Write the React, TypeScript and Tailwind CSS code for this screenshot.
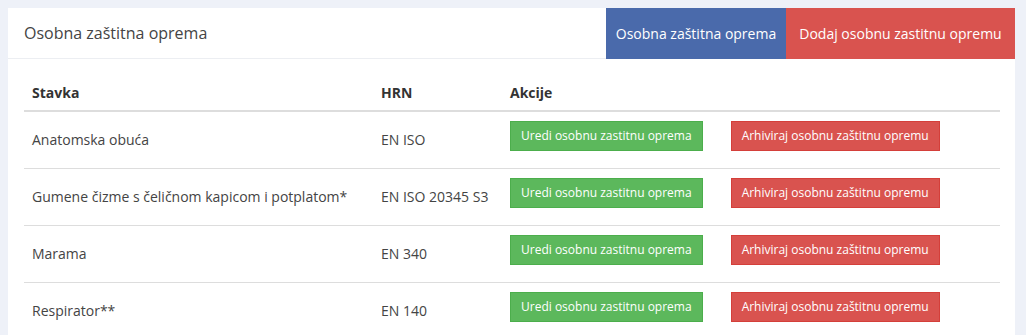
const rows = [
  { name: "Anatomska obuća", hrn: "EN ISO" },
  { name: "Gumene čizme s čeličnom kapicom i potplatom*", hrn: "EN ISO 20345 S3" },
  { name: "Marama", hrn: "EN 340" },
  { name: "Respirator**", hrn: "EN 140" },
];

export default function App() {
  return (
    <div
      className="min-h-[335px] bg-[#eef1f8] pt-2 pl-2 pr-[11px]"
      style={{ fontFamily: '"Open Sans", sans-serif' }}
    >
      <div className="bg-white">
        {/* Header */}
        <div className="flex h-[51px] items-stretch border-b border-[#eceef2]">
          <h2 className="flex flex-1 items-center pl-4 text-[16px] text-[#444]">
            Osobna zaštitna oprema
          </h2>
          <button className="-mb-px w-[180px] bg-[#4a6aab] text-[14px] text-white">
            Osobna zaštitna oprema
          </button>
          <button className="-mb-px w-[229px] bg-[#d9534f] text-[14px] text-white">
            Dodaj osobnu zastitnu opremu
          </button>
        </div>

        {/* Table */}
        <div className="px-4 pt-4">
          <table className="w-[976px] border-collapse text-left text-[14px] text-[#444]">
            <thead>
              <tr className="border-b-2 border-[#ddd]">
                <th className="w-[349px] px-2 py-[7px] font-bold text-[#333]">Stavka</th>
                <th className="w-[129px] px-2 py-[7px] font-bold text-[#333]">HRN</th>
                <th className="px-2 py-[7px] font-bold text-[#333]">Akcije</th>
              </tr>
            </thead>
            <tbody>
              {rows.map((r) => (
                <tr key={r.name} className="h-[57px] border-b border-[#ddd]">
                  <td className="px-2 pb-px align-middle">{r.name}</td>
                  <td className="px-2 pb-px align-middle">{r.hrn}</td>
                  <td className="px-2 pt-[9px] pb-[17px] align-top">
                    <div className="flex">
                      <button className="h-[30px] border border-[#4cae4c] bg-[#5cb85c] px-[10px] text-[12px] text-white">
                        Uredi osobnu zastitnu oprema
                      </button>
                      <button className="ml-[28px] h-[30px] border border-[#d43f3a] bg-[#d9534f] px-[10px] text-[12px] text-white">
                        Arhiviraj osobnu zaštitnu opremu
                      </button>
                    </div>
                  </td>
                </tr>
              ))}
            </tbody>
          </table>
        </div>
      </div>
    </div>
  );
}
